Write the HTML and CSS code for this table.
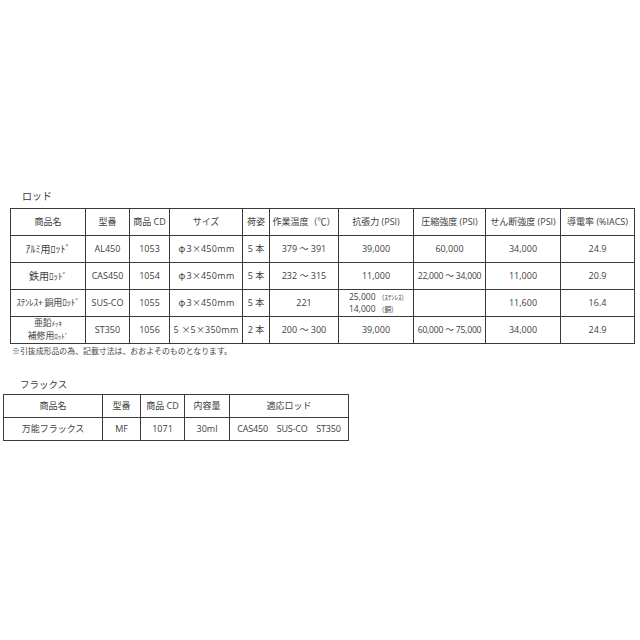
FILE: index.html
```html
<!DOCTYPE html>
<html lang="ja">
<head>
<meta charset="utf-8">
<title>ロッド / フラックス</title>
<link rel="stylesheet" href="styles.css">
</head>
<body>
<div class="page">
  <section class="block rods">
    <div class="caption cap-rod">ロッド</div>
    <table class="spec spec-rod">
      <colgroup>
        <col class="c1"><col class="c2"><col class="c3"><col class="c4"><col class="c5">
        <col class="c6"><col class="c7"><col class="c8"><col class="c9"><col class="c10">
      </colgroup>
      <tr class="head">
        <td>商品名</td><td>型番</td><td>商品 CD</td><td>サイズ</td><td>荷姿</td>
        <td>作業温度（℃）</td><td>抗張力 (PSI)</td><td>圧縮強度 (PSI)</td><td>せん断強度 (PSI)</td><td>導電率 (%IACS)</td>
      </tr>
      <tr>
        <td class="name">ｱﾙﾐ用ﾛｯﾄﾞ</td><td>AL450</td><td>1053</td><td class="size"><span class="fw">φ</span>3<span class="fw">×</span>450mm</td><td>5 本</td>
        <td>379 ～ 391</td><td>39,000</td><td>60,000</td><td>34,000</td><td>24.9</td>
      </tr>
      <tr>
        <td class="name">鉄用<span class="hw">ﾛｯﾄﾞ</span></td><td>CAS450</td><td>1054</td><td class="size"><span class="fw">φ</span>3<span class="fw">×</span>450mm</td><td>5 本</td>
        <td>232 ～ 315</td><td>11,000</td><td class="wide">22,000 ～ 34,000</td><td>11,000</td><td>20.9</td>
      </tr>
      <tr>
        <td class="name name-sm">ｽﾃﾝﾚｽ+ 銅用ﾛｯﾄﾞ</td><td>SUS-CO</td><td>1055</td><td class="size"><span class="fw">φ</span>3<span class="fw">×</span>450mm</td><td>5 本</td>
        <td>221</td><td class="two"><span class="ln">25,000 <small>（ｽﾃﾝﾚｽ)</small></span><span class="ln">14,000 <small>（銅)</small></span></td><td></td><td>11,600</td><td>16.4</td>
      </tr>
      <tr>
        <td class="name two-name"><span class="ln">亜鉛<span class="hw">ﾒｯｷ</span></span><span class="ln">補修用<span class="hw">ﾛｯﾄﾞ</span></span></td><td>ST350</td><td>1056</td><td class="size">5 <span class="fw">×</span>5<span class="fw">×</span>350mm</td><td>2 本</td>
        <td>200 ～ 300</td><td>39,000</td><td class="wide">60,000 ～ 75,000</td><td>34,000</td><td>24.9</td>
      </tr>
    </table>
    <div class="note">※引抜成形品の為、記載寸法は、おおよそのものとなります。</div>
  </section>

  <section class="block flux">
    <div class="caption cap-flux">フラックス</div>
    <table class="spec spec-flux">
      <colgroup>
        <col class="f1"><col class="f2"><col class="f3"><col class="f4"><col class="f5">
      </colgroup>
      <tr class="head">
        <td>商品名</td><td>型番</td><td>商品 CD</td><td>内容量</td><td>適応ロッド</td>
      </tr>
      <tr>
        <td class="jp">万能フラックス</td><td>MF</td><td>1071</td><td>30ml</td><td class="rods-list">CAS450　SUS-CO　ST350</td>
      </tr>
    </table>
  </section>
</div>
</body>
</html>
```

FILE: styles.css
```css
html, body {
  margin: 0;
  padding: 0;
  background: #ffffff;
}
body {
  font-family: "Open Sans", "Noto Sans CJK JP", sans-serif;
  color: #404040;
  width: 640px;
  height: 640px;
  overflow: hidden;
}
.page {
  padding-top: 189px;
}
.block {
  display: flex;
  flex-direction: column;
}
.rods {
  padding-left: 10px;
}
.caption {
  font-family: "Noto Sans CJK JP", sans-serif;
  font-size: 10px;
  line-height: 14px;
  color: #3a3a3a;
}
.cap-rod {
  padding-left: 12px;
  margin-bottom: 5px;
}
.spec {
  border-collapse: collapse;
  table-layout: fixed;
  border: 1.5px solid #2e2e2e;
}
.spec td {
  border: 1px solid #3a3a3a;
  text-align: center;
  vertical-align: middle;
  font-size: 9px;
  line-height: 12px;
  padding: 0 1px;
  white-space: nowrap;
  overflow: hidden;
}
.spec-rod {
  width: 624px;
}
.spec-rod tr {
  height: 27px;
}
.c1 { width: 75px; }
.c2 { width: 44px; }
.c3 { width: 40px; }
.c4 { width: 73px; }
.c5 { width: 27px; }
.c6 { width: 69px; }
.c7 { width: 75px; }
.c8 { width: 72px; }
.c9 { width: 75px; }
.c10 { width: 74px; }

.spec td.name {
  font-family: "Noto Sans CJK JP", sans-serif;
  font-size: 10px;
}
.spec td.name-sm {
  font-size: 9px;
  letter-spacing: -0.2px;
  padding: 0;
}
.hw {
  font-size: 9px;
}
.spec td.two-name {
  padding: 0;
}
.two-name .ln {
  display: block;
  line-height: 12.8px;
  font-size: 8.8px;
}
.two-name .ln .hw {
  font-size: 7px;
}
.size {
  letter-spacing: 0.3px;
}
.fw {
  display: inline-block;
  width: 1em;
  text-align: center;
  font-family: "Noto Sans CJK JP", sans-serif;
}
.spec td.two {
  text-align: left;
  padding: 0 0 0 10px;
}
.two .ln {
  display: block;
  line-height: 12px;
  font-size: 8.5px;
}
.two small {
  font-family: "Noto Sans CJK JP", sans-serif;
  font-size: 6.8px;
}
.spec td.wide {
  font-size: 8.6px;
  letter-spacing: -0.2px;
  padding: 0;
}
.note {
  font-family: "Noto Sans CJK JP", sans-serif;
  font-size: 7.9px;
  line-height: 12px;
  padding-left: 2px;
  margin-top: 1px;
  color: #444;
}

.flux {
  padding-left: 3px;
  margin-top: 20px;
}
.cap-flux {
  font-size: 9.5px;
  padding-left: 17px;
  margin-bottom: 3px;
}
.spec-flux {
  width: 345px;
}
.spec-flux tr {
  height: 23px;
}
.f1 { width: 99px; }
.f2 { width: 38px; }
.f3 { width: 44px; }
.f4 { width: 45px; }
.f5 { width: 119px; }
.spec td.jp {
  font-family: "Noto Sans CJK JP", sans-serif;
}
.spec td.rods-list {
  letter-spacing: -0.2px;
}
```
